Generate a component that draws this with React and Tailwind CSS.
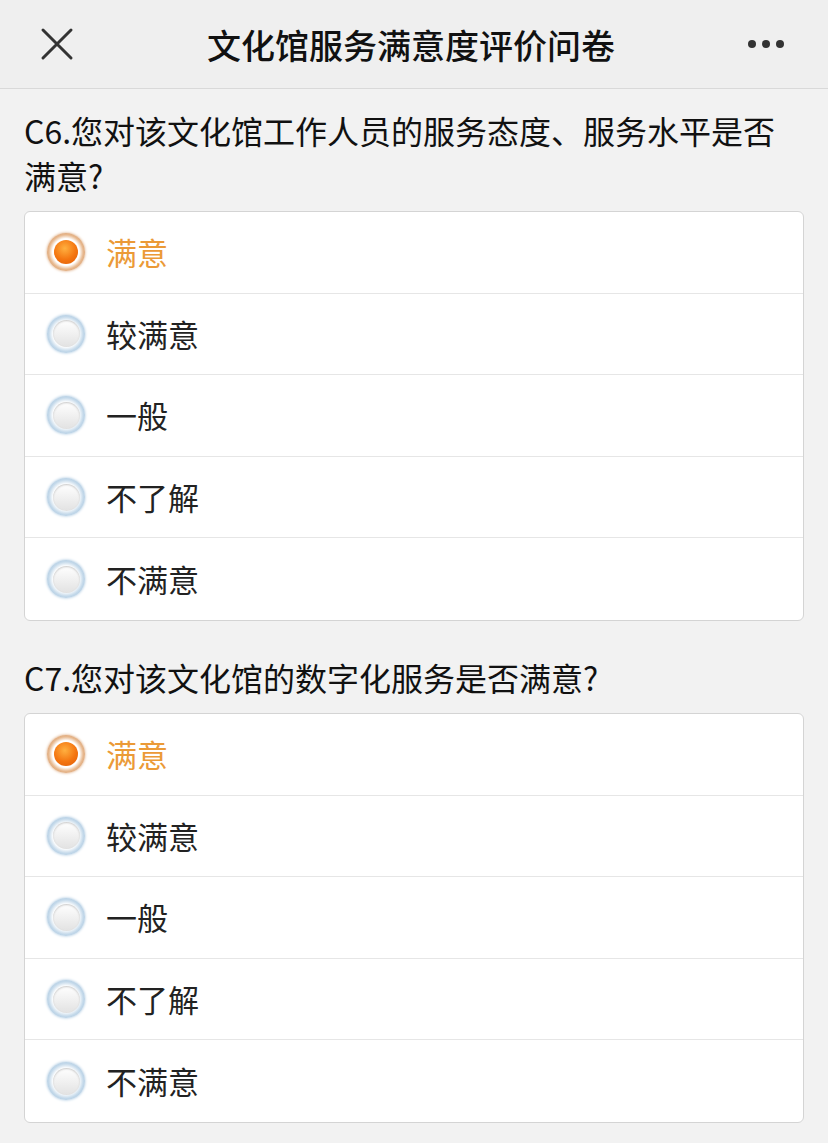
import React from "react";

const options = ["满意", "较满意", "一般", "不了解", "不满意"];

const Radio = ({ checked }) =>
  checked ? (
    <span className="w-[38px] h-[38px] rounded-full flex items-center justify-center bg-[radial-gradient(circle,#fff_50%,#e7b88e_64%,#c47a42_100%)] shadow-[0_0_3px_#d9a070]">
      <span className="w-[24px] h-[24px] rounded-full bg-[radial-gradient(circle_at_45%_35%,#ffb040_0%,#f47510_55%,#de5c08_100%)]" />
    </span>
  ) : (
    <span className="w-[38px] h-[38px] rounded-full flex items-center justify-center bg-[radial-gradient(circle,#ffffff_48%,#c4d9ea_64%,#8cb2d2_100%)] shadow-[0_0_3px_#9fc0dc]">
      <span className="w-[27px] h-[27px] rounded-full bg-[linear-gradient(180deg,#ffffff_0%,#e2e2e2_100%)] shadow-[inset_0_1px_2px_#c8c8c8]" />
    </span>
  );

const Question = ({ title }) => (
  <div>
    <h3 className="px-[24px] text-[32px] leading-[45px] text-[#111]">{title}</h3>
    <div className="mx-[24px] mt-[13px] bg-white border border-[#d4d4d4] rounded-[6px] divide-y divide-[#e6e6e6]">
      {options.map((o, i) => (
        <div key={o} className="h-[81.6px] flex items-center pl-[22px] gap-[21px]">
          <Radio checked={i === 0} />
          <span className={`text-[31px] ${i === 0 ? "text-[#eb9a37]" : "text-[#222]"}`}>{o}</span>
        </div>
      ))}
    </div>
  </div>
);

export default function App() {
  return (
    <div
      className="w-[828px] h-[1143px] bg-[#f2f2f2] overflow-hidden"
      style={{ fontFamily: '"Noto Sans CJK SC", "Noto Sans", sans-serif' }}
    >
      {/* Header */}
      <div className="h-[89px] bg-[#efefef] border-b border-[#d9d9d9] flex items-center justify-between px-[40px]">
        <svg width="34" height="34" viewBox="0 0 34 34" className="text-[#333]">
          <path d="M3 3 L31 31 M31 3 L3 31" stroke="currentColor" strokeWidth="3" strokeLinecap="round" />
        </svg>
        <h1 className="text-[34px] font-medium text-[#111]">文化馆服务满意度评价问卷</h1>
        <div className="flex gap-[6px] pr-[4px]">
          <span className="w-[8px] h-[8px] rounded-full bg-[#333]" />
          <span className="w-[8px] h-[8px] rounded-full bg-[#333]" />
          <span className="w-[8px] h-[8px] rounded-full bg-[#333]" />
        </div>
      </div>

      <div className="pt-[19px]">
        <Question title="C6.您对该文化馆工作人员的服务态度、服务水平是否满意?" />
        <div className="h-[34px]" />
        <Question title="C7.您对该文化馆的数字化服务是否满意?" />
      </div>
    </div>
  );
}
